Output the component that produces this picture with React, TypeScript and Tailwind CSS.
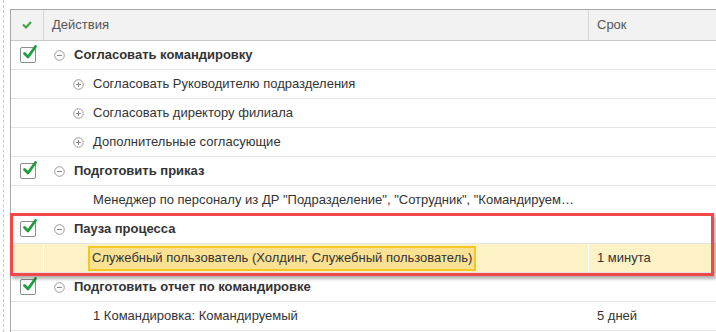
const rows: { level: 1 | 2; text: string; checked?: boolean; icon?: 'minus' | 'plus' | 'none'; term?: string; selected?: boolean }[] = [
  { level: 1, text: 'Согласовать командировку', checked: true, icon: 'minus' },
  { level: 2, text: 'Согласовать Руководителю подразделения', icon: 'plus' },
  { level: 2, text: 'Согласовать директору филиала', icon: 'plus' },
  { level: 2, text: 'Дополнительные согласующие', icon: 'plus' },
  { level: 1, text: 'Подготовить приказ', checked: true, icon: 'minus' },
  {
    level: 2,
    text: 'Менеджер по персоналу из ДР "Подразделение", "Сотрудник", "Командируем…',
    icon: 'none',
  },
  { level: 1, text: 'Пауза процесса', checked: true, icon: 'minus' },
  { level: 2, text: 'Служебный пользователь (Холдинг, Служебный пользователь)', icon: 'none', term: '1 минута', selected: true },
  { level: 1, text: 'Подготовить отчет по командировке', checked: true, icon: 'minus' },
  { level: 2, text: '1 Командировка: Командируемый', icon: 'none', term: '5 дней' },
]

/* Icons */
const CircleIcon = ({ plus }: { plus?: boolean }) => (
  <svg width="11" height="11" viewBox="0 0 11 11" className="shrink-0">
    <circle cx="5.5" cy="5.5" r="4.8" fill="none" stroke="#9a9a9a" strokeWidth="1" />
    <line x1="3" y1="5.5" x2="8" y2="5.5" stroke="#8a8a8a" strokeWidth="1" />
    {plus && <line x1="5.5" y1="3" x2="5.5" y2="8" stroke="#8a8a8a" strokeWidth="1" />}
  </svg>
)

const CheckBox = () => (
  <div className="relative w-[16px] h-[16px] border border-[#8c8c8c] rounded-[2px] bg-white">
    <svg width="16" height="17" viewBox="0 0 16 17" className="absolute left-[1px] top-[-4px]">
      <path d="M2.5 9.5 L6 13 L13.5 2.5" fill="none" stroke="#1d9e3a" strokeWidth="2.8" strokeLinecap="round" strokeLinejoin="round" />
    </svg>
  </div>
)

const App: React.FC = () => {
  return (
    <div
      className="relative w-[716px] h-[332px] bg-white overflow-hidden flex text-[13px] text-[#333]"
      style={{ fontFamily: '"Liberation Sans", Arial, sans-serif' }}>
      {/* left gutter */}
      <div className="w-[10px] shrink-0 flex">
        <div className="ml-[3px] h-full border-l border-dashed border-[#c8c8c8]" />
      </div>

      {/* table */}
      <div className="flex-1 mt-[9px] border-l border-t border-[#a8a8a8]">
        <div className="flex h-[31px] bg-[#f2f2f2] border-b border-[#c8c8c8]">
          <div className="w-[33px] shrink-0 flex items-center justify-center border-r border-[#d6d6d6]">
            <svg width="10" height="8" viewBox="0 0 10 8">
              <path d="M1 3.5 L4 6.5 L9 1" fill="none" stroke="#3aa53a" strokeWidth="2" />
            </svg>
          </div>
          <div className="w-[545px] shrink-0 flex items-center pl-[8px] text-[#555] border-r border-[#d6d6d6]">Действия</div>
          <div className="flex-1 flex items-center pl-[8px] text-[#555]">Срок</div>
        </div>

        {rows.map((r, i) => (
          <div
            key={i}
            className={`flex h-[29px] border-b border-[#e4e4e4] ${r.selected ? 'bg-[#fdf1c6]' : ''}`}>
            <div className={`w-[33px] shrink-0 pl-[9px] pt-[6px] ${r.selected ? 'border-r border-white' : ''}`}>
              {r.checked && <CheckBox />}
            </div>
            <div
              className={`w-[545px] shrink-0 flex items-center min-w-0 ${r.selected ? 'border-r border-white' : ''} ${
                r.level == 1 ? 'pl-[10px]' : 'pl-[29px]'
              }`}>
              {r.icon == 'none' ? (
                <div className="w-[11px] shrink-0" />
              ) : (
                <CircleIcon plus={r.icon == 'plus'} />
              )}
              {r.selected ? (
                <div className="ml-[4px] h-[25px] flex items-center px-[2px] bg-[#fbe193] border-2 border-[#f6c723] whitespace-nowrap">
                  {r.text}
                </div>
              ) : (
                <div className={`ml-[9px] whitespace-nowrap ${r.level == 1 ? 'font-bold' : ''}`}>{r.text}</div>
              )}
            </div>
            <div className="flex-1 flex items-center pl-[8px]">{r.term}</div>
          </div>
        ))}
      </div>

      {/* highlight frame */}
      <div className="absolute left-[10px] top-[213px] w-[704px] h-[63px] border-[3px] border-[#f24848] shadow-[2px_3px_3px_rgba(0,0,0,0.3)]" />
    </div>
  )
}

export default App
